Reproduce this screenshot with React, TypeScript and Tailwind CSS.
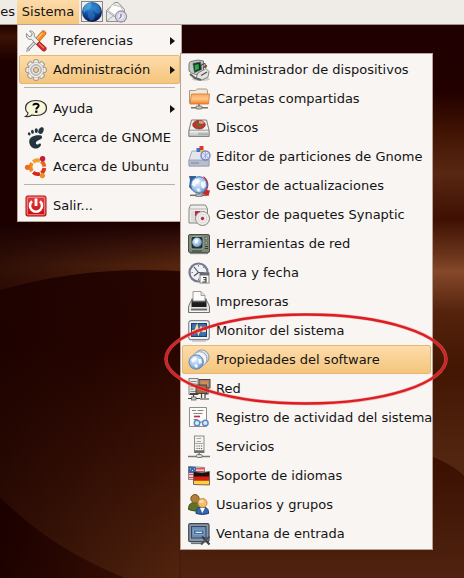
import type { ReactNode } from "react";

function Icon({ children }: { children: ReactNode }) {
  return (
    <svg viewBox="0 0 24 24" className="size-6 shrink-0" aria-hidden="true">
      {children}
    </svg>
  );
}

function Gradients() {
  return (
    <svg className="absolute size-0" aria-hidden="true">
      <defs>
        <linearGradient id="metal" x1="0" y1="0" x2="0" y2="1">
          <stop offset="0" stopColor="#fafafa" />
          <stop offset="1" stopColor="#b4b6b4" />
        </linearGradient>
        <linearGradient id="orange" x1="0" y1="0" x2="0" y2="1">
          <stop offset="0" stopColor="#f9a860" />
          <stop offset="0.5" stopColor="#ffc68a" />
          <stop offset="1" stopColor="#f08020" />
        </linearGradient>
        <linearGradient id="redBtn" x1="0" y1="0" x2="0" y2="1">
          <stop offset="0" stopColor="#e84040" />
          <stop offset="1" stopColor="#c40a10" />
        </linearGradient>
        <linearGradient id="toner" x1="0" y1="0" x2="0" y2="1">
          <stop offset="0" stopColor="#6a6a6c" />
          <stop offset="0.6" stopColor="#1c1c1e" />
        </linearGradient>
        <radialGradient id="earth" cx="0.4" cy="0.25" r="0.8">
          <stop offset="0" stopColor="#3f9cd8" />
          <stop offset="0.45" stopColor="#1656a8" />
          <stop offset="1" stopColor="#040f40" />
        </radialGradient>
        <radialGradient id="paleEarth" cx="0.4" cy="0.35" r="0.7">
          <stop offset="0" stopColor="#e6f2ff" />
          <stop offset="0.6" stopColor="#9dc0ea" />
          <stop offset="1" stopColor="#5b88c4" />
        </radialGradient>
      </defs>
    </svg>
  );
}

const BrowserIcon = () => (
  <Icon>
    <circle cx="12" cy="12" r="10" fill="url(#earth)" />
    <path d="M5 5l5-2.500 2 2-2 2-1 3-3 1-2 3-1-4z" fill="#58b4e4" opacity="0.6" />
    <path d="M15 3l4 3 2 5-2 3-3-1-3-4 1-3z" fill="#3f92d0" opacity="0.5" />
    <path d="M8 13l4-1 3 3-1 4-3 2-3-4z" fill="#2c7cc4" opacity="0.55" />
    <rect x="1.500" y="1.500" width="21" height="20" fill="none" stroke="#222" strokeDasharray="1 1" />
  </Icon>
);

const MailIcon = () => (
  <Icon>
    <path d="M2.500 10.500L11 2.500h3l6.500 7V21.500h-18z" fill="#e9e9e7" stroke="#8f8f8d" />
    <path d="M4.500 10.500L8 4.500l9 2.500 2 4-7 5z" fill="#fff" stroke="#b5b5b3" strokeWidth="0.8" />
    <path d="M3 11l8 6M3 21l7-6" fill="none" stroke="#a5a5a3" />
    <circle cx="17" cy="16.500" r="5.500" fill="#eae6f2" stroke="#9a94ac" strokeWidth="1.300" />
    <circle cx="17" cy="16.500" r="3.800" fill="none" stroke="#c8c2d8" strokeWidth="0.800" />
    <path d="M17 14v2.500l-1.500 2" fill="none" stroke="#55506a" />
  </Icon>
);

const PreferencesIcon = () => (
  <Icon>
    <path d="M13 11L4 20.500" stroke="#7c7c7c" strokeWidth="3" />
    <path d="M13 11L4 20.500" stroke="#e8e8e8" strokeWidth="1.400" />
    <path d="M2.500 22.500l1-3.500 2.500 2z" fill="#ddd" stroke="#777" strokeWidth="0.600" />
    <path d="M18.500 1.800q2-.5 3.200 1.400.6 1.300-.2 2.300L14 14l-3.500-3.500z" fill="#f68c1c" stroke="#c25c0c" strokeWidth="0.8" />
    <path d="M18.500 4l-6 6.500" stroke="#ffc47c" strokeWidth="1.200" />
    <path d="M2.500 4.500c-.8 3.500 1.500 6.500 5 5.800l5.500 5.700 3-3-5.700-5.500C11 4 8.500 1.500 5.500 2l2.600 2.600-.6 2.400-2.400.6z" fill="#f0f0f0" stroke="#7c7c7c" strokeWidth="0.9" />
    <path d="M12.300 15.500l3-3 6.200 5.500c2 2-.8 5.500-3.200 3.500z" fill="#d42a20" stroke="#98140c" strokeWidth="0.8" />
    <path d="M15 14.500l5 4.800" stroke="#f47a68" strokeWidth="1.200" />
  </Icon>
);

const GearIcon = () => (
  <Icon>
    <g fill="#efedea" stroke="#97928a" strokeWidth="1">
      {[0, 45, 90, 135, 180, 225, 270, 315].map((angle) => (
        <rect key={angle} x="9.500" y="1.700" width="5" height="6" rx="1.500" transform={`rotate(${angle} 12 12)`} />
      ))}
    </g>
    <circle cx="12" cy="12" r="7.600" fill="#efedea" stroke="#b3aea6" strokeWidth="0.600" />
    <circle cx="12" cy="12" r="5.400" fill="#cfccc7" stroke="#a29d95" strokeWidth="0.800" />
    <circle cx="12" cy="12" r="3.700" fill="#f3f1ee" />
    <circle cx="12" cy="12" r="2.500" fill="#f9cf8e" stroke="#88847c" strokeWidth="1" />
  </Icon>
);

const HelpIcon = () => (
  <Icon>
    <path d="M12 3.500c6 0 10.500 2.800 10.500 7.500S18 18.500 12 18.500c-1.500 0-3-.2-4.200-.5-1.800 1.500-4 2-6.300 1.500 1.500-.8 2.500-2 2.500-3.500-1.600-1.200-2.500-3-2.500-5C1.500 6.300 6 3.500 12 3.500z" fill="#f7f7dc" stroke="#34352c" strokeWidth="1.200" />
    <path d="M9.400 8.600c0-2.600 5.400-2.600 5.200.2-.1 1.800-2.300 1.600-2.300 3.600" fill="none" stroke="#000" strokeWidth="2" />
    <rect x="11.200" y="13.600" width="2.200" height="2.200" fill="#000" />
  </Icon>
);

const GnomeIcon = () => (
  <Icon>
    <g fill="#22343e">
      <ellipse cx="17" cy="4.600" rx="2.500" ry="3.500" transform="rotate(22 17 4.600)" />
      <ellipse cx="12.300" cy="4.600" rx="1.600" ry="2.400" transform="rotate(-4 12 4.600)" />
      <ellipse cx="8.500" cy="5.800" rx="1.400" ry="2" transform="rotate(-16 8.500 6)" />
      <ellipse cx="5.300" cy="7.800" rx="1.300" ry="1.600" transform="rotate(-28 5.300 8)" />
      <path d="M17.300 9.600C12 8.300 5.300 10.500 5.200 15.500c0 4.500 3.500 7.500 7.300 7 4-.5 5.500-4.500 3.700-5-1.500-.4-1.700 1.400-3.200 1-1.700-.6-1.400-2.800.2-3.600 2-1.100 6.900-2 4.100-5.300z" />
    </g>
  </Icon>
);

const UbuntuIcon = () => (
  <Icon>
    <g fill="none" strokeWidth="3.800">
      <path d="M9.200 7A7 7 0 0 1 16 5.700" stroke="#f0a02c" />
      <path d="M17.300 6.300A7 7 0 0 1 20.300 11.600" stroke="#e8641c" />
      <path d="M20.300 13A7 7 0 0 1 17.300 18.100" stroke="#d83a18" />
      <path d="M16 18.700A7 7 0 0 1 9.200 17.400" stroke="#d2281c" />
      <path d="M8 16.200A7 7 0 0 1 8 8" stroke="#f08a24" />
    </g>
    <circle cx="3.500" cy="12.300" r="2.600" fill="#ee6c1c" />
    <circle cx="18.600" cy="3.800" r="2.700" fill="#c41c34" />
    <circle cx="18.400" cy="20.600" r="2.600" fill="#f0901e" />
  </Icon>
);

const PowerIcon = () => (
  <Icon>
    <rect x="2" y="2" width="20" height="20" rx="1.500" fill="url(#redBtn)" stroke="#a80a0a" />
    <rect x="3.200" y="3.200" width="17.600" height="17.600" rx="1" fill="none" stroke="#f49a9a" strokeWidth="1" />
    <path d="M8 7.200a6 6 0 1 0 8 0" fill="none" stroke="#fff" strokeWidth="2.500" />
    <path d="M12 4.500v7.500" stroke="#fff" strokeWidth="2.800" />
  </Icon>
);

const DevicesIcon = () => (
  <Icon>
    <ellipse cx="14" cy="21" rx="9" ry="2" fill="#cfccc8" />
    <path d="M2 6q0-2 2-2.500L11 2l5.500 1v9l-6.500 5-5.500-2-2.500-2z" fill="#c4c8c4" stroke="#6c706c" strokeWidth="0.900" />
    <path d="M6 5.500l7.500-1.500 1 7.500-7 3z" fill="#12301e" stroke="#50544f" strokeWidth="0.7" />
    <path d="M7.500 7l4-1 .5 5-4 1.500z" fill="#27a850" />
    <path d="M11 15l8-4.500 3 3-1 5.500-6 3-6-2z" fill="#e2e3de" stroke="#6a6a68" strokeWidth="0.8" />
    <path d="M14 7.500l3-2 2 1M16 10l4-2.500M14 17.500l6-3.500" fill="none" stroke="#4c504c" strokeWidth="1.300" />
    <path d="M3 16l5 4 6 2" fill="none" stroke="#5e625e" strokeWidth="2" />
    <circle cx="18.500" cy="8.500" r="1.400" fill="#8c4a30" />
  </Icon>
);

const SharedFolderIcon = () => (
  <Icon>
    <path d="M2.500 16V3.500h6l2-1.500h9l1 2v12z" fill="#f3e8dc" stroke="#a08c7a" strokeWidth="0.9" />
    <path d="M3 17L4.500 7H22.500L21.500 17z" fill="url(#orange)" stroke="#d88038" strokeWidth="0.9" />
    <path d="M12 17v3M4 20.800h17" stroke="#73736f" strokeWidth="1.400" />
    <rect x="9" y="19" width="6" height="3" rx="1" fill="#c6c8c2" stroke="#62625e" strokeWidth="0.8" />
  </Icon>
);

const DiskIcon = () => (
  <Icon>
    <path d="M4.500 4h15l2.500 10v6.500H2V14z" fill="#f1f0ee" stroke="#7b7b78" />
    <path d="M2 14.200h20v6.300H2z" fill="url(#metal)" stroke="#80807c" strokeWidth="0.8" />
    <ellipse cx="12" cy="8.700" rx="6.300" ry="4.300" fill="#c43428" stroke="#7e3630" strokeWidth="0.8" />
    <path d="M12 8.700V4.500a6 4 0 0 1 5.500 2.500z" fill="#e49484" />
    <ellipse cx="12" cy="9" rx="2.600" ry="1.700" fill="#56703c" />
    <path d="M12 16.500v2.500M14 16.500v2.500M16 16.500v2.500M18 16.500v2.500M20 16.500v2.500" stroke="#888884" strokeWidth="0.8" />
  </Icon>
);

const PartitionIcon = () => (
  <Icon>
    <path d="M5 6h14l3 9v6H2v-6z" fill="#e3e6ec" stroke="#a0a4b0" strokeWidth="0.9" />
    <path d="M2 15h20v6H2z" fill="#b8bdce" stroke="#989cac" strokeWidth="0.8" />
    <rect x="9.500" y="3" width="4" height="4" fill="#3874d0" />
    <rect x="12.500" y="1" width="4" height="4" fill="#dc3828" />
    <rect x="13.500" y="5" width="3" height="3" fill="#f0c828" />
    <circle cx="18.500" cy="10.500" r="4.500" fill="#dce4fa" stroke="#7c84b8" strokeWidth="1.400" />
    <path d="M15.500 8l6 5M21.500 8l-6 5M18.500 6.500v8" stroke="#98a2d4" strokeWidth="0.8" />
    <path d="M4 18h8" stroke="#7e8292" />
  </Icon>
);

const UpdateIcon = () => (
  <Icon>
    <path d="M2 2h7v4L5 9v7l-3-3 1-7z" fill="#30609c" />
    <path d="M16 2c6 3 6.500 10 4 14l3 .5-1.500 5.500-6.500-2 2-3c3-4 2-10-1-15z" fill="#d22428" />
    <circle cx="12" cy="11" r="8.300" fill="url(#paleEarth)" stroke="#486fa8" />
    <path d="M6 7l4-2 3 1-1 3-3 1-1 3-3-2zM14 8l4-1 1 5-3 3-2-3z" fill="#fff" opacity="0.85" />
    <path d="M9 15l3-1 2 3-3 1z" fill="#fff" opacity="0.8" />
    <path d="M3 21.300h17" stroke="#70706c" strokeWidth="1.500" />
    <rect x="9" y="20" width="6" height="2.500" fill="#bcbeb8" stroke="#666" strokeWidth="0.700" />
  </Icon>
);

const PackageIcon = () => (
  <Icon>
    <path d="M3.500 2h15l2 4v14H2V6z" fill="#eeeeec" stroke="#858582" />
    <path d="M2 6h18.500" stroke="#b4b4b0" />
    <path d="M4 8h4v11H4z" fill="#dcdcd8" />
    <path d="M8 8h5v5H8z" fill="#c02848" />
    <circle cx="15.500" cy="15.500" r="7" fill="#eeeeee" stroke="#858582" />
    <circle cx="15.500" cy="15.500" r="4.400" fill="none" stroke="#d6d6d4" />
    <circle cx="15.500" cy="15.500" r="2.200" fill="#c02848" stroke="#fff" strokeWidth="0.800" />
  </Icon>
);

const NetToolsIcon = () => (
  <Icon>
    <rect x="1.500" y="2.500" width="21" height="18" rx="1.500" fill="#7c8678" stroke="#485048" />
    <rect x="4" y="4.500" width="12" height="12.500" rx="2" fill="#1e3426" stroke="#a4ac9e" strokeWidth="0.9" />
    <circle cx="10" cy="10.300" r="4.800" fill="url(#paleEarth)" />
    <path d="M7.500 9l2-2 2 1-1 2-2 2z" fill="#fff" />
    <circle cx="19.200" cy="6.500" r="1.400" fill="#b4bcae" stroke="#3c443c" strokeWidth="0.600" />
    <circle cx="19.200" cy="11" r="1.400" fill="#b4bcae" stroke="#3c443c" strokeWidth="0.600" />
    <path d="M18 14.500h3M18 16.500h3M5 19h10" stroke="#343c34" />
    <path d="M3 21.500h18" stroke="#868c84" strokeWidth="1.300" />
  </Icon>
);

const ClockIcon = () => (
  <Icon>
    <circle cx="11.500" cy="11.500" r="9" fill="#eef0f6" stroke="#777a8a" strokeWidth="2.200" />
    <path d="M7 6l4.500 5.500H17M11.500 11.500L7 15" fill="none" stroke="#4c4e5c" strokeWidth="1.100" />
    <path d="M11.500 4v1.500M4.500 11.500H6M11.500 17.500V19M17 6l-1 1" stroke="#777a90" />
    <rect x="13" y="12" width="9" height="10" fill="#fff" stroke="#82827e" />
    <rect x="13" y="11.500" width="9" height="3" fill="#6a6a70" />
    <path d="M16 16.500h3v4.500h-3.500M16.500 18.700H19" fill="none" stroke="#333" strokeWidth="1.100" />
  </Icon>
);

const PrinterIcon = () => (
  <Icon>
    <path d="M2.500 14L5 9.500h14l2.500 4.500 1 3v5.500h-21V17z" fill="#e4e4e2" stroke="#72726f" />
    <path d="M4.500 8.500h15v8.500h-15z" fill="url(#toner)" />
    <path d="M6 1.500h8l4 4V11H6z" fill="#fbfbfb" stroke="#92928f" strokeWidth="0.9" />
    <path d="M14 1.500v4h4" fill="#ddd" stroke="#92928f" strokeWidth="0.800" />
    <path d="M4 19.500h16" stroke="#6a6a6c" strokeWidth="1.800" />
    <path d="M3 21.500h18" stroke="#fff" strokeWidth="0.800" />
  </Icon>
);

const MonitorIcon = () => (
  <Icon>
    <rect x="1.700" y="1.700" width="20.600" height="19" rx="2.500" fill="#f1f2f2" stroke="#81878f" strokeWidth="1.200" />
    <rect x="4.500" y="4.500" width="15" height="13" fill="#3768a8" stroke="#1e3d6c" />
    <path d="M5 8h14M5 14h14M8 5v12M16 5v12" stroke="#5a88c0" strokeWidth="0.600" />
    <path d="M5 12h3l2-5 1.500 7.500 2.500-6 1.500 3.500h3.500" fill="none" stroke="#f6dc98" strokeWidth="1.800" />
    <path d="M5 22h14" stroke="#b6b8ba" strokeWidth="1.200" />
  </Icon>
);

const SoftwareIcon = () => (
  <Icon>
    <circle cx="14.700" cy="9.200" r="7.300" fill="#dfe3e8" stroke="#8998aa" />
    <circle cx="12.700" cy="11" r="7.300" fill="#f2f4f6" stroke="#8998aa" strokeWidth="0.900" />
    <circle cx="9.200" cy="14" r="7.200" fill="url(#paleEarth)" stroke="#6088ba" />
    <path d="M4 12l3-3 3 1-1 2-2 1-1 2zM11 11l3 0 1 4-3 1zM7 17l3-1 1 3-2 1z" fill="#fff" opacity="0.9" />
  </Icon>
);

const NetworkIcon = () => (
  <Icon>
    <rect x="2" y="1.500" width="9" height="16" fill="#e6e6e2" stroke="#777773" strokeWidth="0.900" />
    <path d="M3.500 4.500h6M3.500 7h6M3.500 9.500h3M3.500 12h3M3.500 14.500h6" stroke="#888884" />
    <rect x="12" y="2.500" width="11" height="8.500" fill="#a88468" stroke="#50453c" />
    <rect x="14" y="4.500" width="7" height="4.500" fill="#d88a58" />
    <rect x="9" y="8" width="10.500" height="8.500" fill="#8c6a54" stroke="#50453c" />
    <rect x="11" y="10" width="6.500" height="4.500" fill="#c86430" />
    <path d="M3 17h8" stroke="#444" strokeWidth="2" />
    <path d="M21 11v6h-3M6.500 17.500v4M1 21.500h12M14.500 16.500V21M13 22h9M18 17v4" fill="none" stroke="#3f403c" strokeWidth="1.200" />
    <rect x="4.500" y="20" width="4.500" height="3" fill="#c6c8c2" stroke="#555" strokeWidth="0.700" />
  </Icon>
);

const LogIcon = () => (
  <Icon>
    <path d="M2.500 1.500h17v19h-17z" fill="#fbfbfa" stroke="#8e8e8b" />
    <path d="M5 4.500h4M10.500 4.500h6M6.500 7.500h9M6.500 13.500h4" stroke="#858582" />
    <path d="M7 10.500h6" stroke="#d02040" strokeWidth="1.600" />
    <circle cx="10" cy="17" r="2.800" fill="#d9e8fa" stroke="#5c88be" strokeWidth="1.400" />
    <circle cx="18.300" cy="17" r="2.800" fill="#d9e8fa" stroke="#5c88be" strokeWidth="1.400" />
    <path d="M13 16.500q1.300-1.500 2.500 0" fill="none" stroke="#5c88be" strokeWidth="1.200" />
  </Icon>
);

const ServerIcon = () => (
  <Icon>
    <rect x="7.500" y="1" width="9.500" height="16.500" fill="#f3f3f1" stroke="#8d8d8a" />
    <path d="M9.500 3.500h4.500M9.500 6.500h4.500M8 8.500h8.500" stroke="#a8a8a4" />
    <path d="M9.500 11h6M9.500 13.500h6" stroke="#62625f" strokeWidth="1.200" strokeDasharray="1.200 1" />
    <path d="M7.500 16.500h9.500" stroke="#6a6a66" strokeWidth="2.400" />
    <path d="M12.200 17v3M1 21.500h22" stroke="#777773" strokeWidth="1.300" />
    <rect x="9.500" y="19.500" width="5.500" height="3" rx="1" fill="#d6d8d1" stroke="#666" strokeWidth="0.800" />
  </Icon>
);

const FlagsIcon = () => (
  <Icon>
    <path d="M1.500 2.500l16 1v12h-16z" fill="#f1eeee" stroke="#7a6c70" strokeWidth="0.800" />
    <path d="M2 10.500h15M2 13.500h15M9 4.700h8.500M9 7.500h8.500" stroke="#d85058" strokeWidth="1.400" />
    <path d="M1.500 2.500l7.500.5V9H1.500z" fill="#3c66a8" />
    <path d="M3 5h1M5 6.500h1M7 5h1" stroke="#fff" strokeWidth="0.800" />
    <path d="M6.500 7.500l8 1.200 8-1.200v13.500l-16-.5z" fill="#d81c10" stroke="#65605a" strokeWidth="0.900" />
    <path d="M7 8l8 1.200L22 8v4.500H7z" fill="#161210" />
    <path d="M7 16.800h15v3.700l-15-.4z" fill="#f8d43c" />
  </Icon>
);

const UsersIcon = () => (
  <Icon>
    <path d="M1.500 16.500c0-5.500 2.500-7 6.500-7s6 2.500 6 8q-7 1.500-12.500-1z" fill="#5d7428" stroke="#3f5018" />
    <circle cx="8" cy="5.700" r="4.200" fill="#b0803c" stroke="#7c5824" />
    <path d="M9 20.500c0-5 2-6.500 6-6.500s7 1.500 6.500 6.500q-6 2-12.500 0z" fill="#3468ae" stroke="#1b3d74" />
    <path d="M13 15l2.300 5 2.700-5z" fill="#fff" />
    <circle cx="15.500" cy="10" r="4.500" fill="#f6bd6e" stroke="#c48a3c" />
    <ellipse cx="14.500" cy="8.500" rx="2.200" ry="1.600" fill="#fde0ae" />
  </Icon>
);

const LoginIcon = () => (
  <Icon>
    <rect x="1.700" y="1.700" width="20.300" height="18" rx="1.500" fill="#8c96a2" stroke="#404a56" strokeWidth="1.200" />
    <rect x="4.500" y="4.500" width="14.500" height="11.500" fill="#6a8eb8" stroke="#2f4866" />
    <rect x="6.500" y="8" width="10.500" height="4.500" fill="#44688f" stroke="#88a6c8" strokeWidth="0.900" />
    <path d="M8.500 10.300h6.500" stroke="#f0f5fa" strokeWidth="1.200" />
    <path d="M4 21.300h12" stroke="#6a727c" strokeWidth="1.600" />
    <path d="M15 14.500l7.500 8" stroke="#383d44" strokeWidth="2" />
    <path d="M22.500 14.500L14 22.500" stroke="#4a5058" strokeWidth="2" />
  </Icon>
);

function Desktop() {
  return (
    <svg
      viewBox="0 0 464 578"
      preserveAspectRatio="none"
      className="absolute inset-0 size-full"
      aria-hidden="true"
    >
      <defs>
        <linearGradient id="sky" gradientUnits="userSpaceOnUse" x1="0" y1="0" x2="0" y2="578">
          <stop offset="0" stopColor="#1c0000" />
          <stop offset="0.385" stopColor="#1c0000" />
          <stop offset="0.42" stopColor="#38120a" />
          <stop offset="0.46" stopColor="#56260f" />
          <stop offset="0.5" stopColor="#4a1c0a" />
          <stop offset="1" stopColor="#4a1c0a" />
        </linearGradient>
        <linearGradient id="corner" gradientUnits="userSpaceOnUse" x1="0" y1="24" x2="0" y2="60">
          <stop offset="0" stopColor="#1c0000" />
          <stop offset="0.35" stopColor="#3c1204" />
          <stop offset="1" stopColor="#1c0000" />
        </linearGradient>
        <linearGradient id="hill" gradientUnits="userSpaceOnUse" x1="0" y1="270" x2="0" y2="578">
          <stop offset="0" stopColor="#280602" />
          <stop offset="0.25" stopColor="#290500" />
          <stop offset="0.6" stopColor="#3b1205" />
          <stop offset="1" stopColor="#52240e" />
        </linearGradient>
        <linearGradient id="shade" gradientUnits="userSpaceOnUse" x1="0" y1="0" x2="180" y2="0">
          <stop offset="0" stopColor="#160000" stopOpacity="0.6" />
          <stop offset="1" stopColor="#160000" stopOpacity="0" />
        </linearGradient>
        <linearGradient id="foot" gradientUnits="userSpaceOnUse" x1="0" y1="540" x2="125" y2="578">
          <stop offset="0" stopColor="#1c0100" />
          <stop offset="1" stopColor="#340d04" />
        </linearGradient>
        <linearGradient id="east" gradientUnits="userSpaceOnUse" x1="0" y1="0" x2="0" y2="578">
          <stop offset="0" stopColor="#1e0000" />
          <stop offset="0.16" stopColor="#220000" />
          <stop offset="0.23" stopColor="#421403" />
          <stop offset="0.3" stopColor="#572712" />
          <stop offset="0.38" stopColor="#3f1002" />
          <stop offset="0.44" stopColor="#6a341b" />
          <stop offset="0.47" stopColor="#85482a" />
          <stop offset="0.54" stopColor="#54220c" />
          <stop offset="0.64" stopColor="#421602" />
          <stop offset="0.8" stopColor="#532612" />
          <stop offset="1" stopColor="#532612" />
        </linearGradient>
        <linearGradient id="eastFoot" gradientUnits="userSpaceOnUse" x1="0" y1="465" x2="0" y2="578">
          <stop offset="0" stopColor="#3c1102" />
          <stop offset="1" stopColor="#502310" />
        </linearGradient>
      </defs>
      <rect width="464" height="578" fill="url(#sky)" />
      <rect y="24" width="120" height="36" fill="url(#corner)" />
      <path d="M0 290Q140 250 300 290V578H0z" fill="url(#hill)" />
      <rect x="181" width="283" height="578" fill="url(#east)" />
      <path d="M181 545V400Q433 440 464 476V578H181z" fill="url(#eastFoot)" />
      <path d="M181 500v78h-2v-78z" fill="#4a1c0a" />
      <rect y="222" width="180" height="356" fill="url(#shade)" />
      <path d="M0 497Q50 548 125 578H0z" fill="url(#foot)" />
    </svg>
  );
}

interface Entry {
  label: string;
  icon: ReactNode;
  arrow?: boolean;
  active?: boolean;
  circled?: boolean;
  children?: ReactNode;
}

function MenuItem({ label, icon, arrow, active, circled, children }: Entry) {
  return (
    <li role="none" className="relative">
      <button
        type="button"
        role="menuitem"
        className={
          active
            ? "flex h-[29px] w-full items-center gap-[5px] rounded-xs border border-[#e5b873] bg-linear-to-b from-[#fddcaa] to-[#f4c57c] px-1 text-left"
            : "flex h-[29px] w-full items-center gap-[5px] border border-transparent px-1 text-left"
        }
      >
        {icon}
        <span className="grow whitespace-nowrap">{label}</span>
        {arrow && (
          <svg viewBox="0 0 5 8" className="h-2 w-[5px] shrink-0" aria-hidden="true">
            <path d="M0 0l5 4-5 4z" fill="#111" />
          </svg>
        )}
      </button>
      {circled && (
        <svg
          className="pointer-events-none absolute -inset-x-[18px] -inset-y-8 z-10 h-[93px] w-[calc(100%+35px)]"
          viewBox="0 0 284 93"
          preserveAspectRatio="none"
          aria-hidden="true"
        >
          <ellipse cx="142" cy="46" rx="140" ry="44.500" fill="none" stroke="#f08080" strokeWidth="3.600" opacity="0.6" />
          <ellipse cx="142" cy="46" rx="140" ry="44.500" fill="none" stroke="#dc1e22" strokeWidth="2.400" />
        </svg>
      )}
      {children}
    </li>
  );
}

const Separator = () => (
  <li role="separator" className="flex h-[10px] items-start px-[5px] pt-[3px]">
    <span className="h-px w-full bg-[#b9b2ac]" />
  </li>
);

const adminEntries: Entry[] = [
  { label: "Administrador de dispositivos", icon: <DevicesIcon /> },
  { label: "Carpetas compartidas", icon: <SharedFolderIcon /> },
  { label: "Discos", icon: <DiskIcon /> },
  { label: "Editor de particiones de Gnome", icon: <PartitionIcon /> },
  { label: "Gestor de actualizaciones", icon: <UpdateIcon /> },
  { label: "Gestor de paquetes Synaptic", icon: <PackageIcon /> },
  { label: "Herramientas de red", icon: <NetToolsIcon /> },
  { label: "Hora y fecha", icon: <ClockIcon /> },
  { label: "Impresoras", icon: <PrinterIcon /> },
  { label: "Monitor del sistema", icon: <MonitorIcon /> },
  { label: "Propiedades del software", icon: <SoftwareIcon />, active: true, circled: true },
  { label: "Red", icon: <NetworkIcon /> },
  { label: "Registro de actividad del sistema", icon: <LogIcon /> },
  { label: "Servicios", icon: <ServerIcon /> },
  { label: "Soporte de idiomas", icon: <FlagsIcon /> },
  { label: "Usuarios y grupos", icon: <UsersIcon /> },
  { label: "Ventana de entrada", icon: <LoginIcon /> },
];

function AdminMenu() {
  return (
    <ul
      role="menu"
      aria-label="Administración"
      className="absolute top-[-2px] left-full w-[253px] border border-[#b9a398] bg-[#f8f5f2] p-px"
    >
      {adminEntries.map((entry) => (
        <MenuItem key={entry.label} {...entry} />
      ))}
    </ul>
  );
}

function SystemMenu() {
  return (
    <ul
      role="menu"
      aria-label="Sistema"
      className="absolute top-full left-0 w-[165px] border border-[#b9a398] bg-[#f8f5f2] p-px"
    >
      <MenuItem label="Preferencias" icon={<PreferencesIcon />} arrow />
      <MenuItem label="Administración" icon={<GearIcon />} arrow active>
        <AdminMenu />
      </MenuItem>
      <Separator />
      <MenuItem label="Ayuda" icon={<HelpIcon />} arrow />
      <MenuItem label="Acerca de GNOME" icon={<GnomeIcon />} />
      <MenuItem label="Acerca de Ubuntu" icon={<UbuntuIcon />} />
      <Separator />
      <MenuItem label="Salir..." icon={<PowerIcon />} />
    </ul>
  );
}

export default function App() {
  return (
    <div className="relative min-h-screen w-full overflow-hidden bg-[#1c0000] font-['DejaVu_Sans',sans-serif] text-[13px] leading-4 text-[#141414]">
      <Gradients />
      <Desktop />
      <nav className="relative flex h-6 items-stretch bg-[#efebe7] shadow-[0_1px_0_#a8928a]">
        <button type="button" className="flex w-[17px] items-center justify-end pr-0.5">
          es
        </button>
        <div className="relative flex">
          <button
            type="button"
            className="flex w-[62px] items-center justify-center bg-linear-to-b from-[#fddcaa] to-[#f4c57c]"
          >
            Sistema
          </button>
          <SystemMenu />
        </div>
        <button type="button" aria-label="Navegador web" className="ml-px flex w-6 items-center">
          <BrowserIcon />
        </button>
        <button type="button" aria-label="Correo" className="flex w-6 items-center">
          <MailIcon />
        </button>
      </nav>
    </div>
  );
}
